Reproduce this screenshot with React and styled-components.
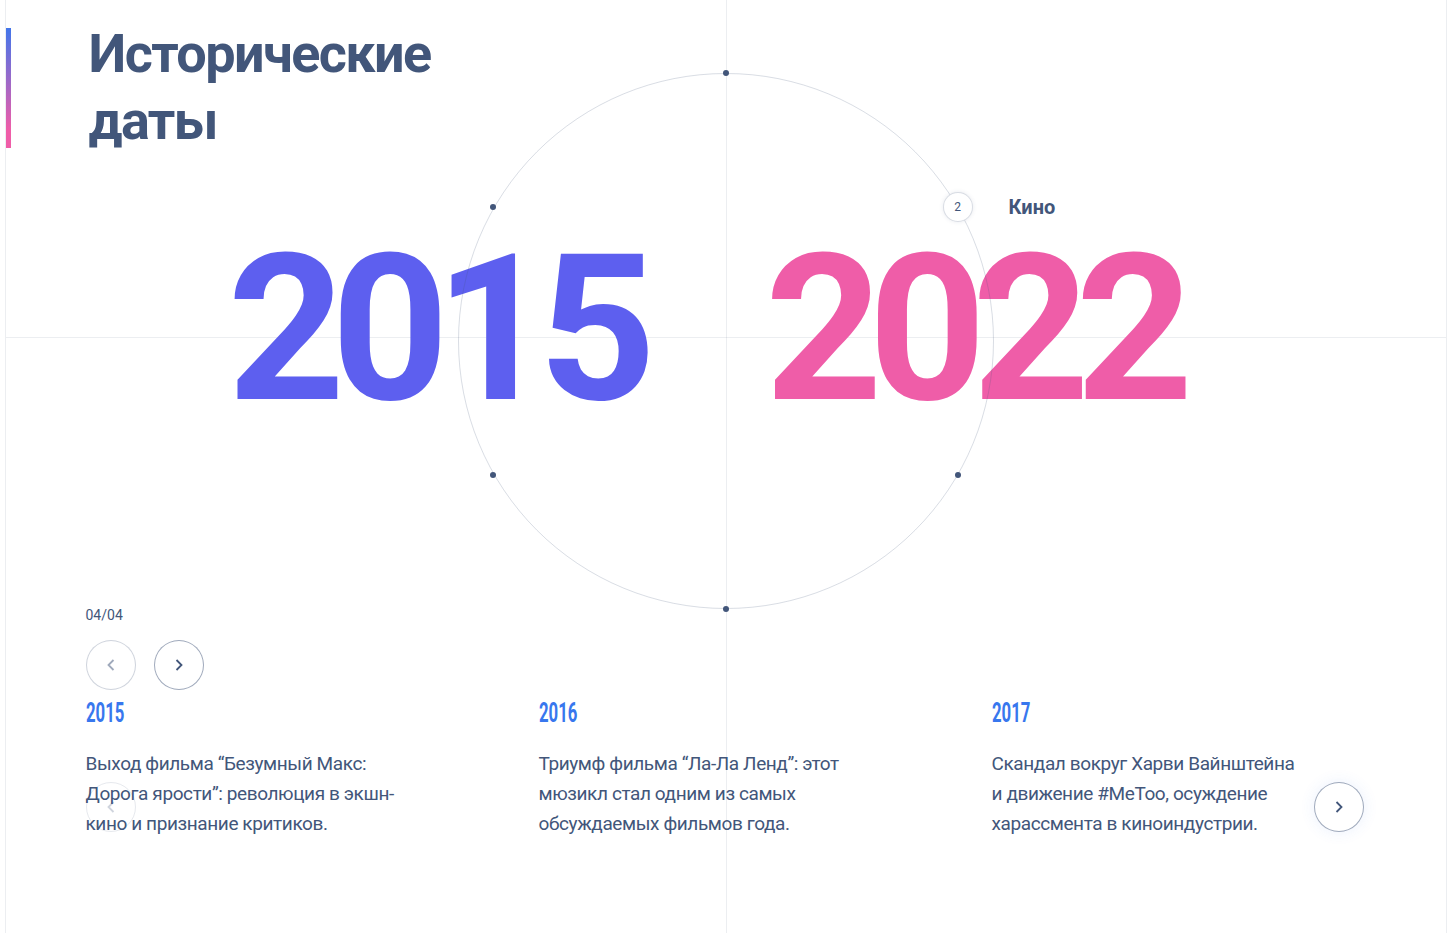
import React from "react";
import styled, { createGlobalStyle } from "styled-components";

const GlobalStyle = createGlobalStyle`
  * {
    box-sizing: border-box;
  }
  body {
    margin: 0;
    background: #fff;
    font-family: Roboto, "Liberation Sans", sans-serif;
    color: #42567a;
  }
`;

const points = [
  { angle: 90 },
  { angle: 150 },
  { angle: 210 },
  { angle: 270 },
  { angle: 330 },
  { angle: 30, active: true, num: 2, label: "Кино" },
];

const slides = [
  {
    year: "2015",
    text: "Выход фильма “Безумный Макс: Дорога ярости”: революция в экшн-кино и признание критиков.",
  },
  {
    year: "2016",
    text: "Триумф фильма “Ла-Ла Ленд”: этот мюзикл стал одним из самых обсуждаемых фильмов года.",
  },
  {
    year: "2017",
    text: "Скандал вокруг Харви Вайнштейна и движение #MeToo, осуждение харассмента в киноиндустрии.",
  },
];

const RADIUS = 268;

function Chevron({ left }) {
  return (
    <svg width="8" height="12" viewBox="0 0 8 12" fill="none">
      <path
        d={left ? "M6.5 1L1.5 6l5 5" : "M1.5 1l5 5-5 5"}
        stroke="currentColor"
        strokeWidth="1.8"
      />
    </svg>
  );
}

export default function App() {
  return (
    <>
      <GlobalStyle />
      <Page>
        <Header>
          <Accent />
          <Title>
            Исторические
            <br />
            даты
          </Title>
        </Header>

        <Years>
          <Year $color="#5d5fef">2015</Year>
          <Year $color="#ef5da8">2022</Year>
        </Years>

        <Ring>
          {points.map((p) => {
            const rad = (p.angle * Math.PI) / 180;
            const x = Math.cos(rad) * RADIUS;
            const y = -Math.sin(rad) * RADIUS;
            const pos = { left: `calc(50% + ${x}px)`, top: `calc(50% + ${y}px)` };
            return p.active ? (
              <ActivePoint key={p.angle} style={pos}>
                {p.num}
              </ActivePoint>
            ) : (
              <Dot key={p.angle} style={pos} />
            );
          })}
        </Ring>
        <ThemeLabel>Кино</ThemeLabel>

        <Footer>
          <Fraction>04/04</Fraction>
          <Controls>
            <RoundButton disabled>
              <Chevron left />
            </RoundButton>
            <RoundButton>
              <Chevron />
            </RoundButton>
          </Controls>

          <Slides>
            {slides.map((s) => (
              <Slide key={s.year}>
                <SlideYear>{s.year}</SlideYear>
                <SlideText>{s.text}</SlideText>
              </Slide>
            ))}
            <SlideNav $side="left" $faint>
              <Chevron left />
            </SlideNav>
            <SlideNav $side="right">
              <Chevron />
            </SlideNav>
          </Slides>
        </Footer>
      </Page>
    </>
  );
}

const Page = styled.main`
  position: relative;
  width: 1442px;
  min-height: 933px;
  margin: 0 auto;
  border-left: 1px solid rgba(66, 86, 122, 0.1);
  border-right: 1px solid rgba(66, 86, 122, 0.1);
  display: flex;
  flex-direction: column;
  overflow: hidden;

  &::before {
    content: "";
    position: absolute;
    top: 0;
    bottom: 0;
    left: 50%;
    width: 1px;
    background: rgba(66, 86, 122, 0.1);
  }

  &::after {
    content: "";
    position: absolute;
    left: 0;
    right: 0;
    top: 337px;
    height: 1px;
    background: rgba(66, 86, 122, 0.1);
  }
`;

const Header = styled.header`
  display: flex;
  align-items: flex-start;
  padding-top: 20px;
`;

const Accent = styled.span`
  flex-shrink: 0;
  width: 5px;
  height: 120px;
  margin-top: 8px;
  background: linear-gradient(180deg, #3877ee -5%, #ef5da8 85%);
`;

const Title = styled.h1`
  margin: 0 0 0 78px;
  font-size: 54px;
  line-height: 67px;
  font-weight: 700;
  letter-spacing: -1.6px;
  color: #42567a;
`;

const Years = styled.div`
  position: relative;
  z-index: 1;
  display: flex;
  justify-content: center;
  gap: 123px;
  margin-top: 73px;
  padding-right: 44px;
  font-size: 205px;
  line-height: 1;
  font-weight: 700;
  letter-spacing: -14px;
`;

const Year = styled.span`
  color: ${(p) => p.$color};
`;

const Ring = styled.div`
  position: absolute;
  z-index: 2;
  top: 73px;
  left: 50%;
  width: ${RADIUS * 2}px;
  height: ${RADIUS * 2}px;
  margin-left: -${RADIUS}px;
  border-radius: 50%;
  border: 1px solid rgba(66, 86, 122, 0.2);
`;

const Dot = styled.span`
  position: absolute;
  width: 6px;
  height: 6px;
  border-radius: 50%;
  background: #42567a;
  transform: translate(-50%, -50%);
`;

const ActivePoint = styled.span`
  position: absolute;
  width: 30px;
  height: 30px;
  border-radius: 50%;
  background: #fff;
  border: 1px solid rgba(66, 86, 122, 0.2);
  box-shadow: 0 0 4px rgba(66, 86, 122, 0.12);
  transform: translate(-50%, -50%);
  display: flex;
  align-items: center;
  justify-content: center;
  font-size: 12px;
  color: #42567a;
`;

const ThemeLabel = styled.span`
  position: absolute;
  z-index: 2;
  top: 194px;
  left: calc(50% + 283px);
  font-size: 20px;
  line-height: 26px;
  font-weight: 700;
  color: #42567a;
  white-space: nowrap;
`;

const Footer = styled.section`
  margin-top: 174px;
  padding: 0 80px;
`;

const Fraction = styled.div`
  font-size: 14px;
  line-height: 18px;
  color: #42567a;
`;

const Controls = styled.div`
  display: flex;
  gap: 18px;
  margin-top: 16px;
`;

const RoundButton = styled.button`
  width: 50px;
  height: 50px;
  padding: 0;
  border-radius: 50%;
  border: 1px solid rgba(66, 86, 122, 0.5);
  background: #fff;
  color: #42567a;
  display: flex;
  align-items: center;
  justify-content: center;
  opacity: ${(p) => (p.disabled ? 0.5 : 1)};
`;

const Slides = styled.div`
  position: relative;
  display: grid;
  grid-template-columns: repeat(3, 314px);
  column-gap: 139px;
  margin-top: 8px;
`;

const Slide = styled.article`
  display: flex;
  flex-direction: column;
  align-items: flex-start;
`;

const SlideYear = styled.span`
  display: inline-block;
  font-size: 27px;
  line-height: 30px;
  font-weight: 700;
  color: #3877ee;
  transform: scaleX(0.62);
  transform-origin: left center;
`;

const SlideText = styled.p`
  margin: 21px 0 0;
  font-size: 19px;
  line-height: 30px;
  letter-spacing: -0.4px;
  color: #42567a;
`;

const SlideNav = styled.button`
  position: absolute;
  top: 84px;
  ${(p) => (p.$side === "left" ? "left: 0;" : "right: 2px;")}
  width: 50px;
  height: 50px;
  padding: 0;
  border-radius: 50%;
  border: 1px solid rgba(66, 86, 122, 0.5);
  background: ${(p) => (p.$faint ? "transparent" : "#fff")};
  box-shadow: ${(p) => (p.$faint ? "none" : "0 0 15px rgba(56, 119, 238, 0.1)")};
  color: #42567a;
  display: flex;
  align-items: center;
  justify-content: center;
  opacity: ${(p) => (p.$faint ? 0.25 : 1)};
`;
